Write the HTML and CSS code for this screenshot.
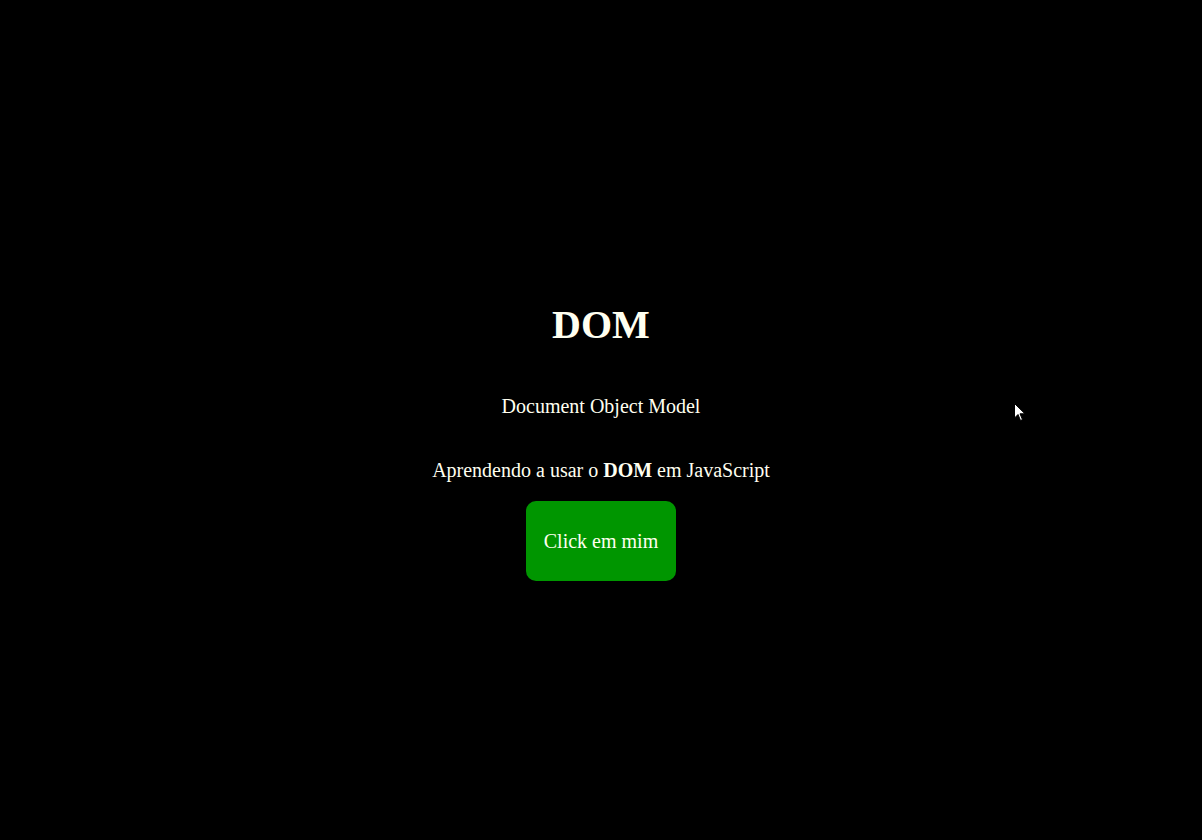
FILE: index.html
```html
<!DOCTYPE html>
<html lang="pt-BR">
<head>
<meta charset="utf-8">
<title>DOM</title>
<link rel="stylesheet" href="styles.css">
</head>
<body>
<main class="page">
  <h1 class="title">DOM</h1>
  <p class="subtitle">Document Object Model</p>
  <p class="lead">Aprendendo a usar o <strong>DOM</strong> em JavaScript</p>
  <button class="btn" type="button">Click em mim</button>
</main>
<svg class="cursor" width="12" height="20" viewBox="0 0 12 20" aria-hidden="true">
  <path d="M0.5 0.5 L0.5 15 L4 11.5 L6.5 17.5 L8.5 16.6 L6 10.8 L11 10.8 Z" fill="#fff" stroke="#000" stroke-width="1"/>
</svg>
</body>
</html>
```
FILE: styles.css
```css
html, body {
  margin: 0;
  padding: 0;
  background: #000;
}
body {
  min-height: 100vh;
  font-family: "Liberation Serif", "Times New Roman", serif;
  color: #fffff0;
}
.page {
  display: flex;
  flex-direction: column;
  align-items: center;
  padding-top: 301px;
}
.title {
  font-size: 40px;
  font-weight: bold;
  margin: 0;
}
.subtitle {
  font-size: 20px;
  margin: 47px 0 0;
}
.lead {
  font-size: 20px;
  margin: 41px 0 0;
}
.lead strong {
  font-weight: bold;
}
.btn {
  margin-top: 19px;
  width: 150px;
  height: 80px;
  border: none;
  border-radius: 10px;
  background: #009600;
  color: #fffff0;
  font-family: "Liberation Serif", "Times New Roman", serif;
  font-size: 20px;
  padding: 0;
  cursor: pointer;
}
.cursor {
  position: absolute;
  left: 1014px;
  top: 403px;
}
```
